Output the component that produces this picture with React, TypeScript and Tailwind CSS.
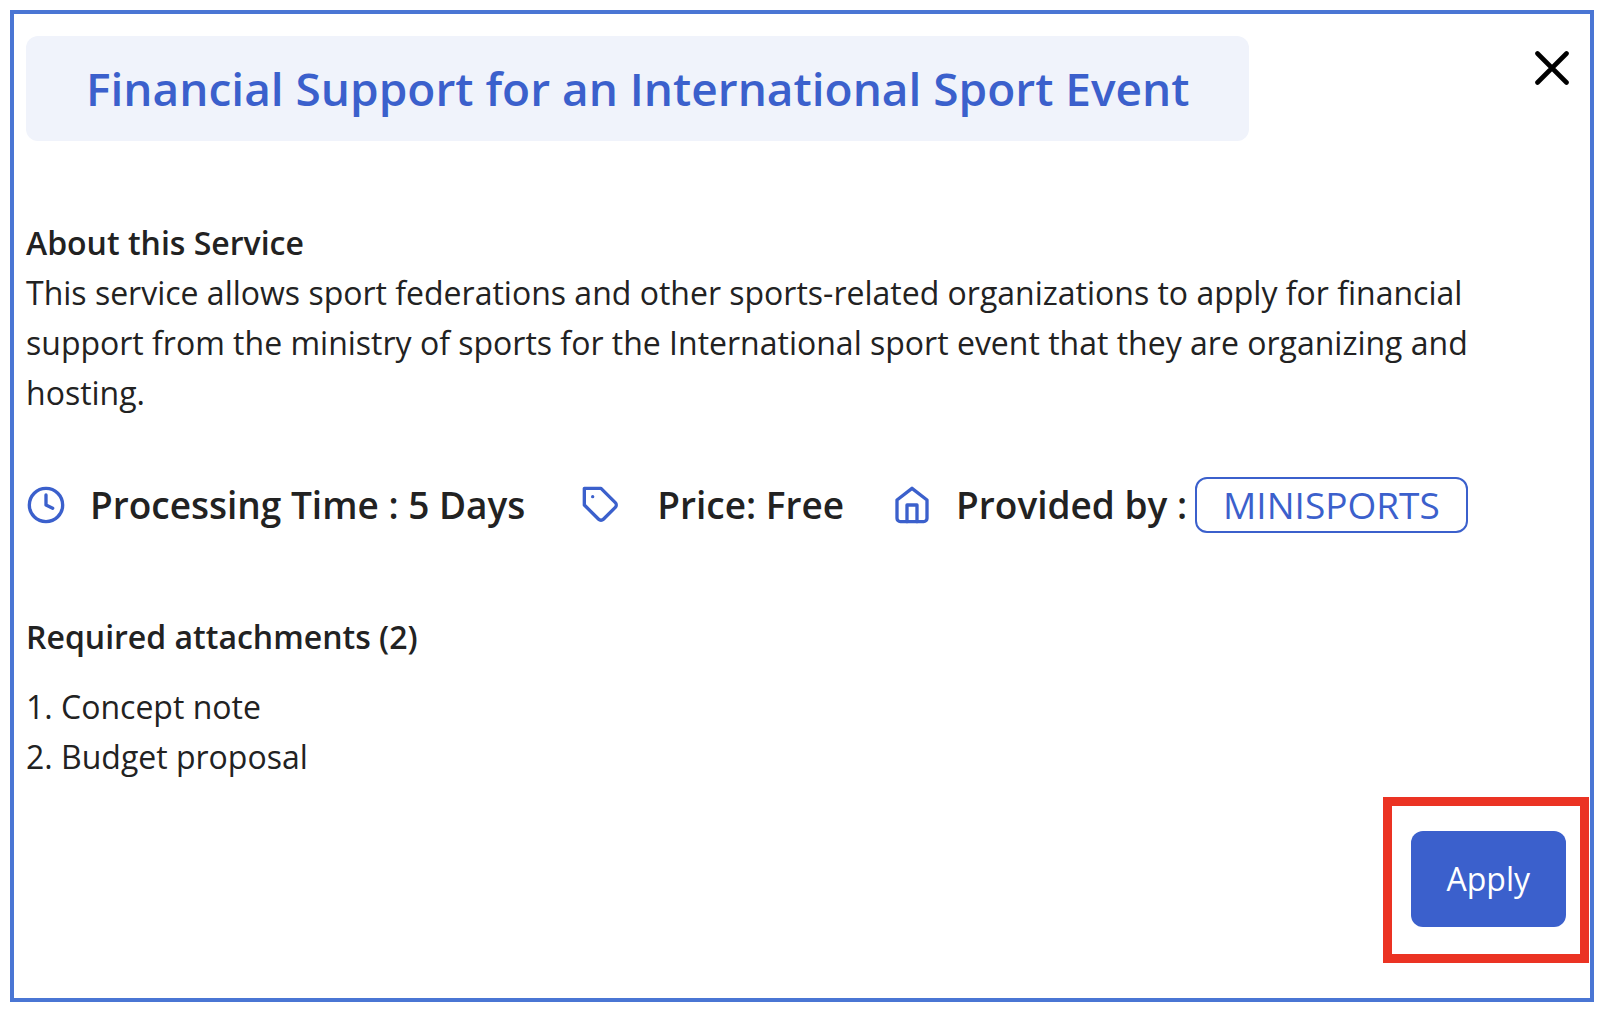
import type { ReactNode } from "react";

const attachments = ["Concept note", "Budget proposal"];

function Icon({ children }: { children: ReactNode }) {
  return (
    <svg
      aria-hidden="true"
      className="size-10 shrink-0 text-[#3b60cc]"
      fill="none"
      stroke="currentColor"
      strokeLinecap="round"
      strokeLinejoin="round"
      strokeWidth="2"
      viewBox="0 0 24 24"
    >
      {children}
    </svg>
  );
}

export default function App() {
  return (
    <main className="bg-white py-[10px] pr-[6px] pl-[10px] font-['Open_Sans',sans-serif] text-[32px] leading-[50px] text-[#222222]">
      <section className="border-4 border-[#4a76d4] bg-white pb-[35px]">
        <header className="flex items-start justify-between pt-[22px] pr-[21px] pl-3">
          <h1 className="rounded-xl bg-[#f0f3fb] px-[60px] py-[22px] text-[46px] leading-[61px] font-semibold text-[#3b60cc]">
            Financial Support for an International Sport Event
          </h1>
          <button aria-label="Close" className="mt-[15px] text-black" type="button">
            <svg
              aria-hidden="true"
              className="size-[34px]"
              fill="none"
              stroke="currentColor"
              strokeLinecap="round"
              strokeWidth="4.6"
              viewBox="0 0 34 34"
            >
              <path d="M2.5 2.5l29 29M31.5 2.5l-29 29" />
            </svg>
          </button>
        </header>

        <div className="mt-[77px] pr-24 pl-3">
          <h2 className="font-semibold">About this Service</h2>
          <p>
            This service allows sport federations and other sports-related organizations to apply for financial support
            from the ministry of sports for the International sport event that they are organizing and hosting.
          </p>
        </div>

        <div className="mt-[59px] flex items-center pl-3 text-[37px] leading-[52px] font-semibold whitespace-nowrap">
          <div className="flex items-center gap-6">
            <Icon>
              <circle cx="12" cy="12" r="10" />
              <path d="M12 6v6l4 2" />
            </Icon>
            <span>Processing Time : 5 Days</span>
          </div>
          <div className="ml-14 flex items-center gap-9">
            <Icon>
              <path d="M20.59 13.41l-7.17 7.17a2 2 0 0 1-2.83 0L2 12V2h10l8.59 8.59a2 2 0 0 1 0 2.82z" />
              <path d="M7 7h.01" />
            </Icon>
            <span>Price: Free</span>
          </div>
          <div className="ml-12 flex items-center gap-6">
            <Icon>
              <path d="M3 9l9-7 9 7v11a2 2 0 0 1-2 2H5a2 2 0 0 1-2-2z" />
              <path d="M9 22V12h6v10" />
            </Icon>
            <span>Provided by :</span>
          </div>
          <span className="ml-2 rounded-xl border-2 border-[#3b60cc] px-[26px] font-normal text-[#3b60cc]">
            MINISPORTS
          </span>
        </div>

        <div className="mt-[79px] pl-3">
          <h2 className="font-semibold">Required attachments (2)</h2>
          <ol className="mt-5 list-inside list-decimal">
            {attachments.map((name) => (
              <li key={name}>{name}</li>
            ))}
          </ol>
        </div>

        <footer className="mt-[15px] flex justify-end pr-px">
          <div className="border-[9px] border-[#eb3323] pt-[25px] pr-[14px] pb-[27px] pl-[19px]">
            <button className="rounded-xl bg-[#3b60cc] px-9 py-[23px] text-white" type="button">
              Apply
            </button>
          </div>
        </footer>
      </section>
    </main>
  );
}
